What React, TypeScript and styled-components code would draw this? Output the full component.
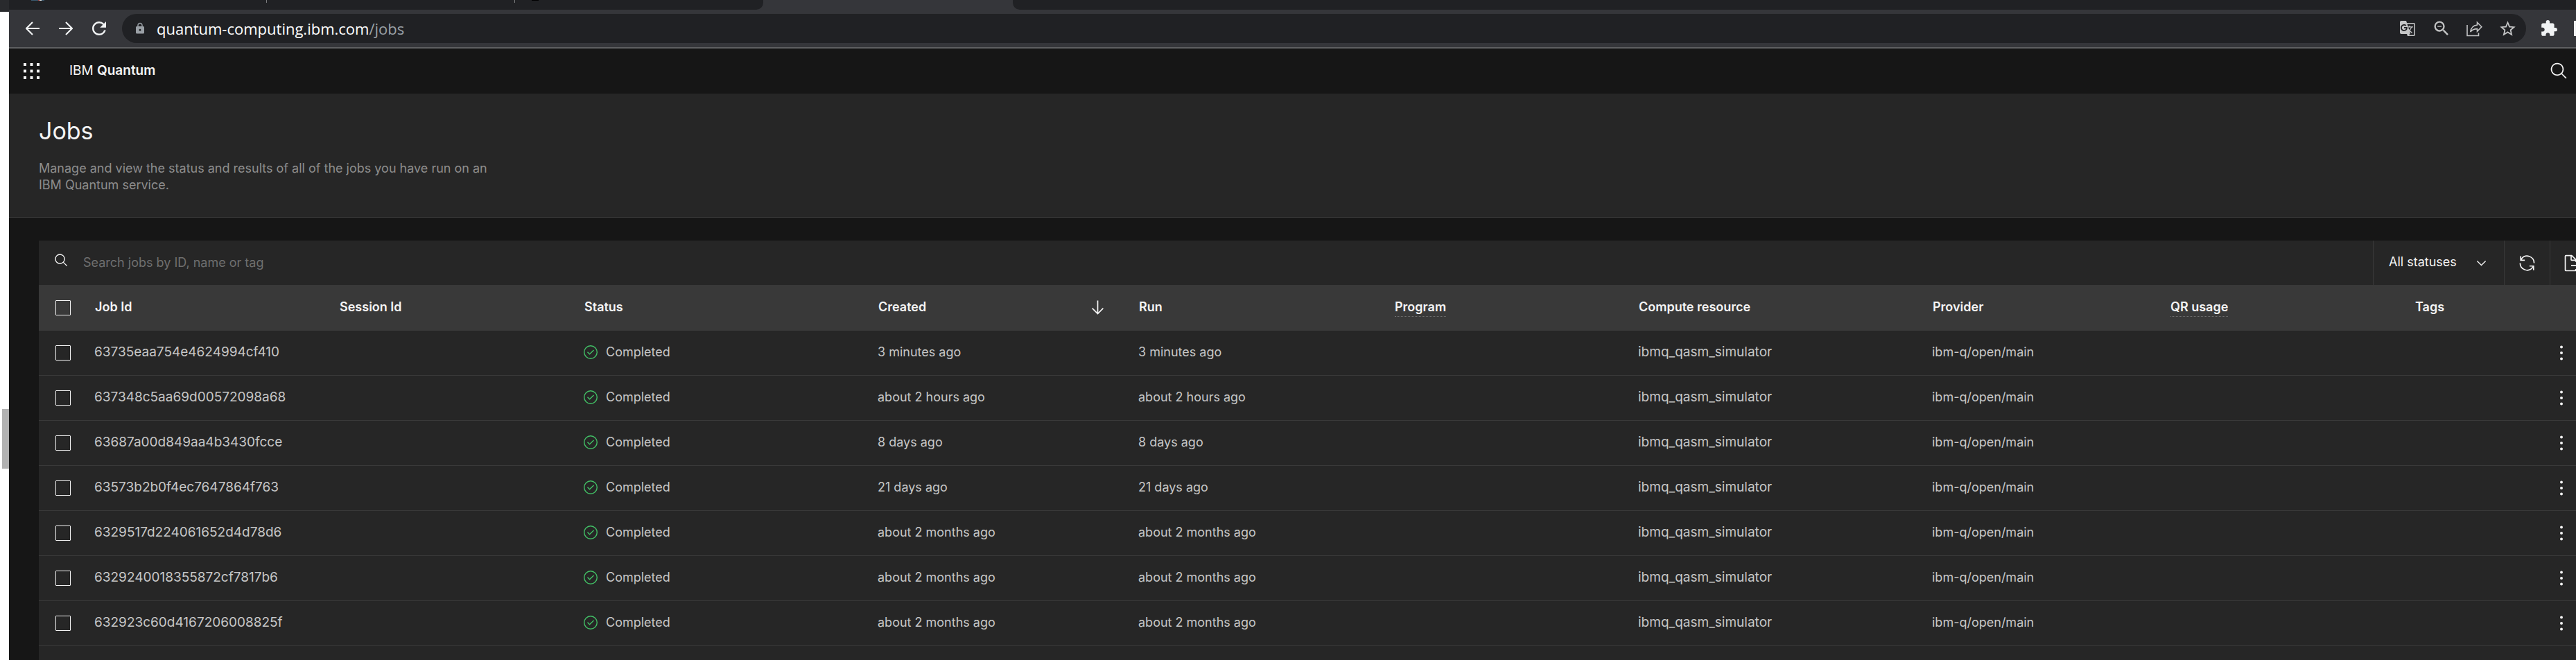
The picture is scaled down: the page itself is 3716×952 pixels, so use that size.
import React from 'react';
import styled, { createGlobalStyle } from 'styled-components';
import { MdExtension, MdGTranslate, MdLock, MdRefresh, MdStarBorder, MdZoomOut } from 'react-icons/md';

const color = {
  bg: '#161616',
  layer: '#262626',
  accent: '#393939',
  text: '#f4f4f4',
  textSecondary: '#c6c6c6',
  textHelper: '#8d8d8d',
  placeholder: '#6f6f6f',
  success: '#42be65',
  frame: '#202124',
  chrome: '#35363a',
};

const GlobalStyle = createGlobalStyle`
  * { box-sizing: border-box; }
  body {
    margin: 0;
    background: ${color.bg};
    color: ${color.text};
    font-family: Inter, "Liberation Sans", sans-serif;
    font-size: 18px;
    line-height: 24px;
  }
  button, input, select { font: inherit; color: inherit; }
  svg { display: block; flex: none; }
`;

/* ---------- window ---------- */

const Screen = styled.div`
  display: flex;
  height: 100vh;
  overflow: hidden;
`;

const BackWindow = styled.div`
  flex: none;
  width: 13px;
  background: #ffffff;
  border-top: 17px solid #292a2d;
`;

const ScrollThumb = styled.div`
  height: 86px;
  margin: 573px 0 0 3px;
  background: #b2b2b2;
`;

const BrowserWindow = styled.div`
  flex: 1;
  min-width: 0;
  display: flex;
  flex-direction: column;
`;

const TabStrip = styled.div`
  flex: none;
  display: flex;
  height: 14px;
  background: ${color.chrome};
`;

const IdleTabs = styled.div<{ $side: 'left' | 'right' }>`
  display: flex;
  background: ${color.frame};
  ${(p) =>
    p.$side === 'left'
      ? 'width: 1088px; border-bottom-right-radius: 10px;'
      : 'flex: 1; margin-left: 360px; border-bottom-left-radius: 10px;'}
`;

const Favicon = styled.span`
  width: 19px;
  height: 1px;
  margin-left: 32px;
  background: linear-gradient(90deg, #3b5a70 55%, #a03a3a 55% 65%, #e8e8e8 65% 80%, #3b5a70 80%);
`;

const TabDivider = styled.span<{ $gap: number }>`
  width: 1px;
  height: 4px;
  margin-left: ${(p) => p.$gap}px;
  background: #7d7e80;
`;

const DarkFavicon = styled.span`
  width: 10px;
  height: 1px;
  margin-left: 24px;
  background: #000000;
`;

const Toolbar = styled.div`
  flex: none;
  display: flex;
  align-items: center;
  height: 56px;
  padding-left: 18px;
  background: ${color.chrome};
  border-bottom: 2px solid #5f6062;
`;

const ChromeButton = styled.button<{ $gap?: number; $tone?: string }>`
  display: flex;
  align-items: center;
  justify-content: center;
  flex: none;
  width: 32px;
  height: 32px;
  padding: 0;
  margin-left: ${(p) => p.$gap ?? 0}px;
  border: 0;
  background: none;
  color: ${(p) => p.$tone ?? '#f1f3f4'};
`;

const Omnibox = styled.div`
  flex: 1;
  display: flex;
  align-items: center;
  height: 42px;
  margin-left: 17px;
  padding: 0 11px 0 17px;
  border-radius: 21px;
  background: ${color.frame};
  color: #9aa0a6;
`;

const Address = styled.a`
  flex: 1;
  margin-left: 15px;
  color: #9aa0a6;
  font-family: "Open Sans", "Noto Sans", sans-serif;
  font-size: 22px;
  line-height: 30px;
  text-decoration: none;

  b {
    color: #ffffff;
    font-weight: 400;
  }
`;

const ProfileEdge = styled.span`
  flex: none;
  width: 3px;
  height: 22px;
  margin-left: 20px;
  background: #f1f3f4;
`;

/* ---------- page ---------- */

const NavBar = styled.header`
  flex: none;
  display: flex;
  align-items: center;
  height: 65px;
  padding: 0 11px 0 21px;
`;

const IconButton = styled.button`
  display: flex;
  align-items: center;
  justify-content: center;
  padding: 0;
  border: 0;
  background: none;
`;

const Brand = styled.a`
  margin: 0 auto 0 43px;
  padding-bottom: 2px;
  color: ${color.text};
  font-size: 19px;
  text-decoration: none;

  b {
    font-weight: 600;
  }
`;

const Intro = styled.section`
  flex: none;
  padding: 32px 43px 34px;
  background: ${color.layer};
  border-bottom: 1px solid ${color.accent};
`;

const Title = styled.h1`
  margin: 0;
  font-size: 34px;
  font-weight: 400;
  line-height: 44px;
`;

const Lead = styled.p`
  max-width: 675px;
  margin: 20px 0 0;
  color: ${color.textHelper};
`;

const Panel = styled.main`
  flex: 1;
  margin: 33px 0 0 43px;
  background: ${color.layer};
`;

const TableToolbar = styled.div`
  display: flex;
  height: 64px;
`;

const SearchField = styled.label`
  flex: 1;
  display: flex;
  align-items: center;
  padding-left: 22px;

  svg {
    margin-bottom: 8px;
  }

  input {
    flex: 1;
    margin-left: 21px;
    padding: 0;
    border: 0;
    outline: 0;
    background: none;
  }

  input::placeholder {
    color: ${color.placeholder};
    opacity: 1;
  }
`;

const StatusFilter = styled.label`
  display: grid;
  align-items: center;
  width: 189px;
  border-left: 1px solid ${color.accent};

  select,
  svg {
    grid-area: 1 / 1;
  }

  select {
    height: 100%;
    padding: 0 56px 2px 22px;
    border: 0;
    appearance: none;
    background: none;
  }

  svg {
    justify-self: end;
    margin-right: 22px;
    pointer-events: none;
  }
`;

const ToolButton = styled(IconButton)<{ $clipped?: boolean }>`
  width: ${(p) => (p.$clipped ? 38 : 66)}px;
  padding-left: ${(p) => (p.$clipped ? 19 : 0)}px;
  justify-content: ${(p) => (p.$clipped ? 'flex-start' : 'center')};
  overflow: hidden;
  border-left: 1px solid ${color.accent};
`;

const Table = styled.table`
  width: 100%;
  table-layout: fixed;
  border-collapse: separate;
  border-spacing: 0;
  text-align: left;
`;

const Col = styled.col<{ $width: number }>`
  width: ${(p) => p.$width}px;
`;

const HeadCell = styled.th`
  height: 66px;
  padding: 0 24px 2px 22px;
  background: ${color.accent};
  font-weight: 600;
`;

const Cell = styled.td<{ $code?: boolean }>`
  height: 65px;
  padding: 0 0 2px 21px;
  border-bottom: 1px solid ${color.accent};
  color: ${color.textSecondary};
  font-size: ${(p) => (p.$code ? 19 : 18)}px;
`;

const CheckHead = styled(HeadCell)`
  padding: 0 0 0 24px;
`;

const CheckCell = styled(Cell)`
  padding: 0 0 0 24px;
`;

const MenuCell = styled(Cell)`
  padding: 0 0 0 11px;
`;

const Checkbox = styled.input`
  display: block;
  width: 22px;
  height: 22px;
  margin: 0;
  appearance: none;
  border: 1px solid ${color.text};
  border-radius: 1px;

  &:checked {
    background: ${color.text};
  }
`;

const Hint = styled.span`
  padding-bottom: 3px;
  border-bottom: 1px dotted ${color.placeholder};
`;

const SortHeader = styled.div`
  display: flex;
  justify-content: space-between;
  align-items: center;
  height: 24px;
`;

const Status = styled.span`
  display: flex;
  align-items: center;
  gap: 12px;
`;

/* ---------- icons ---------- */

const Icon = ({ size = 27, fill = color.text, viewBox = '0 0 32 32', d }: { size?: number; fill?: string; viewBox?: string; d: string }) => (
  <svg width={size} height={size} viewBox={viewBox} fill={fill} aria-hidden="true">
    <path d={d} />
  </svg>
);

const icons = {
  search:
    'M29,27.586l-7.552-7.552a11.018,11.018,0,1,0-1.414,1.414L27.586,29ZM4,13a9,9,0,1,1,9,9A9.01,9.01,0,0,1,4,13Z',
  chevron: 'M16 22 6 12 7.4 10.6 16 19.2 24.6 10.6 26 12Z',
  renew:
    'M12,10H6.78A11,11,0,0,1,27,16h2A13,13,0,0,0,6,7.68V4H4v8h8ZM20,22h5.22A11,11,0,0,1,5,16H3a13,13,0,0,0,23,8.32V28h2V20H20Z',
  export:
    'M13 21H26.17L23.59 23.59 25 25 30 20 25 15 23.59 16.41 26.17 19H13ZM22,14V10a1,1,0,0,0-.3-.7l-7-7A.9.9,0,0,0,14,2H4A2,2,0,0,0,2,4V28a2,2,0,0,0,2,2H20a2,2,0,0,0,2-2V26H20v2H4V4h8v6a2,2,0,0,0,2,2h6v2Zm-8-4V4.4L19.6,10Z',
  arrowDown: 'M24.59 16.59 17 24.17V4H15V24.17L7.41 16.59 6 18 16 28 26 18Z',
  done:
    'M14 21.414 9 16.413 10.413 15 14 18.586 21.585 11 23 12.415ZM16,2A14,14,0,1,0,30,16,14,14,0,0,0,16,2Zm0,26A12,12,0,1,1,28,16,12,12,0,0,1,16,28Z',
};

const HistoryArrow = ({ forward = false }: { forward?: boolean }) => (
  <svg width="20" height="20" viewBox="0 0 20 20" fill="none" stroke="currentColor" strokeWidth="2.2" aria-hidden="true">
    <path d={forward ? 'M0 10H18M10 1l9 9-9 9' : 'M20 10H2M10 1l-9 9 9 9'} />
  </svg>
);

const ShareIcon = () => (
  <svg width="23" height="23" viewBox="0 0 23 23" fill="none" stroke="currentColor" strokeWidth="1.6" aria-hidden="true">
    <path d="M1 6V21.500H17.500V17.500" />
    <path d="M15.500 2.300 21.800 8.800 15.500 15.200V11.600C11 11.600 8 12.800 5.800 16 6.400 10.600 9.600 6.700 15.500 6Z" />
  </svg>
);

const AppsIcon = () => (
  <svg width="23" height="23" viewBox="0 0 23 23" fill={color.text} aria-hidden="true">
    {[0, 9.5, 19].map((y) => [0, 9.5, 19].map((x) => <rect key={`${x}-${y}`} x={x} y={y} width="4" height="4" />))}
  </svg>
);

const MoreIcon = () => (
  <svg width="22" height="22" viewBox="0 0 22 22" fill={color.text} aria-hidden="true">
    <circle cx="11" cy="2.500" r="2" />
    <circle cx="11" cy="11" r="2" />
    <circle cx="11" cy="19.500" r="2" />
  </svg>
);

/* ---------- data ---------- */

const columnWidths = [59, 353, 353, 424, 376, 369, 352, 424, 343, 353, 211, 43];

const jobs = [
  { id: '63735eaa754e4624994cf410', when: '3 minutes ago' },
  { id: '637348c5aa69d00572098a68', when: 'about 2 hours ago' },
  { id: '63687a00d849aa4b3430fcce', when: '8 days ago' },
  { id: '63573b2b0f4ec7647864f763', when: '21 days ago' },
  { id: '6329517d224061652d4d78d6', when: 'about 2 months ago' },
  { id: '6329240018355872cf7817b6', when: 'about 2 months ago' },
  { id: '632923c60d4167206008825f', when: 'about 2 months ago' },
];

const BrowserChrome = () => (
  <>
    <TabStrip>
      <IdleTabs $side="left">
        <Favicon />
        <TabDivider $gap={320} />
        <TabDivider $gap={357} />
        <DarkFavicon />
      </IdleTabs>
      <IdleTabs $side="right" />
    </TabStrip>
    <Toolbar>
      <ChromeButton aria-label="Back"><HistoryArrow /></ChromeButton>
      <ChromeButton aria-label="Forward" $gap={16}><HistoryArrow forward /></ChromeButton>
      <ChromeButton aria-label="Reload" $gap={16}><MdRefresh size={30} /></ChromeButton>
      <Omnibox>
        <MdLock size={18} />
        <Address href="#jobs"><b>quantum-computing.ibm.com</b>/jobs</Address>
        <ChromeButton aria-label="Translate" $tone="#c4c5c6"><MdGTranslate size={24} /></ChromeButton>
        <ChromeButton aria-label="Zoom out" $tone="#c4c5c6" $gap={17}><MdZoomOut size={28} /></ChromeButton>
        <ChromeButton aria-label="Share" $tone="#c4c5c6" $gap={15}><ShareIcon /></ChromeButton>
        <ChromeButton aria-label="Bookmark" $tone="#c4c5c6" $gap={16}><MdStarBorder size={27} /></ChromeButton>
      </Omnibox>
      <ChromeButton aria-label="Extensions" $gap={17}><MdExtension size={26} /></ChromeButton>
      <ProfileEdge />
    </Toolbar>
  </>
);

const JobRow = ({ id, when }: { id: string; when: string }) => (
  <tr>
    <CheckCell><Checkbox type="checkbox" aria-label={`Select ${id}`} /></CheckCell>
    <Cell $code>{id}</Cell>
    <Cell />
    <Cell>
      <Status>
        <Icon size={20} fill={color.success} viewBox="2 2 28 28" d={icons.done} />
        Completed
      </Status>
    </Cell>
    <Cell>{when}</Cell>
    <Cell>{when}</Cell>
    <Cell />
    <Cell $code>ibmq_qasm_simulator</Cell>
    <Cell>ibm-q/open/main</Cell>
    <Cell />
    <Cell />
    <MenuCell><IconButton aria-label="Job actions"><MoreIcon /></IconButton></MenuCell>
  </tr>
);

export default function App() {
  return (
    <Screen>
      <GlobalStyle />
      <BackWindow><ScrollThumb /></BackWindow>
      <BrowserWindow>
        <BrowserChrome />
        <NavBar>
          <IconButton aria-label="Applications"><AppsIcon /></IconButton>
          <Brand href="#home">IBM <b>Quantum</b></Brand>
          <IconButton aria-label="Search"><Icon d={icons.search} /></IconButton>
        </NavBar>
        <Intro>
          <Title>Jobs</Title>
          <Lead>Manage and view the status and results of all of the jobs you have run on an IBM Quantum service.</Lead>
        </Intro>
        <Panel>
          <TableToolbar>
            <SearchField>
              <Icon size={21} d={icons.search} />
              <input type="text" aria-label="Search jobs" placeholder="Search jobs by ID, name or tag" />
            </SearchField>
            <StatusFilter>
              <select aria-label="Status filter"><option>All statuses</option></select>
              <Icon size={21} d={icons.chevron} />
            </StatusFilter>
            <ToolButton aria-label="Refresh"><Icon d={icons.renew} /></ToolButton>
            <ToolButton aria-label="Export" $clipped><Icon d={icons.export} /></ToolButton>
          </TableToolbar>
          <Table>
            <colgroup>{columnWidths.map((w, i) => <Col key={i} $width={w} />)}</colgroup>
            <thead>
              <tr>
                <CheckHead><Checkbox type="checkbox" aria-label="Select all jobs" /></CheckHead>
                <HeadCell>Job Id</HeadCell>
                <HeadCell>Session Id</HeadCell>
                <HeadCell>Status</HeadCell>
                <HeadCell aria-sort="descending">
                  <SortHeader>Created<Icon d={icons.arrowDown} /></SortHeader>
                </HeadCell>
                <HeadCell>Run</HeadCell>
                <HeadCell><Hint>Program</Hint></HeadCell>
                <HeadCell>Compute resource</HeadCell>
                <HeadCell>Provider</HeadCell>
                <HeadCell><Hint>QR usage</Hint></HeadCell>
                <HeadCell>Tags</HeadCell>
                <HeadCell aria-label="Actions" />
              </tr>
            </thead>
            <tbody>{jobs.map((job) => <JobRow key={job.id} {...job} />)}</tbody>
          </Table>
        </Panel>
      </BrowserWindow>
    </Screen>
  );
}
